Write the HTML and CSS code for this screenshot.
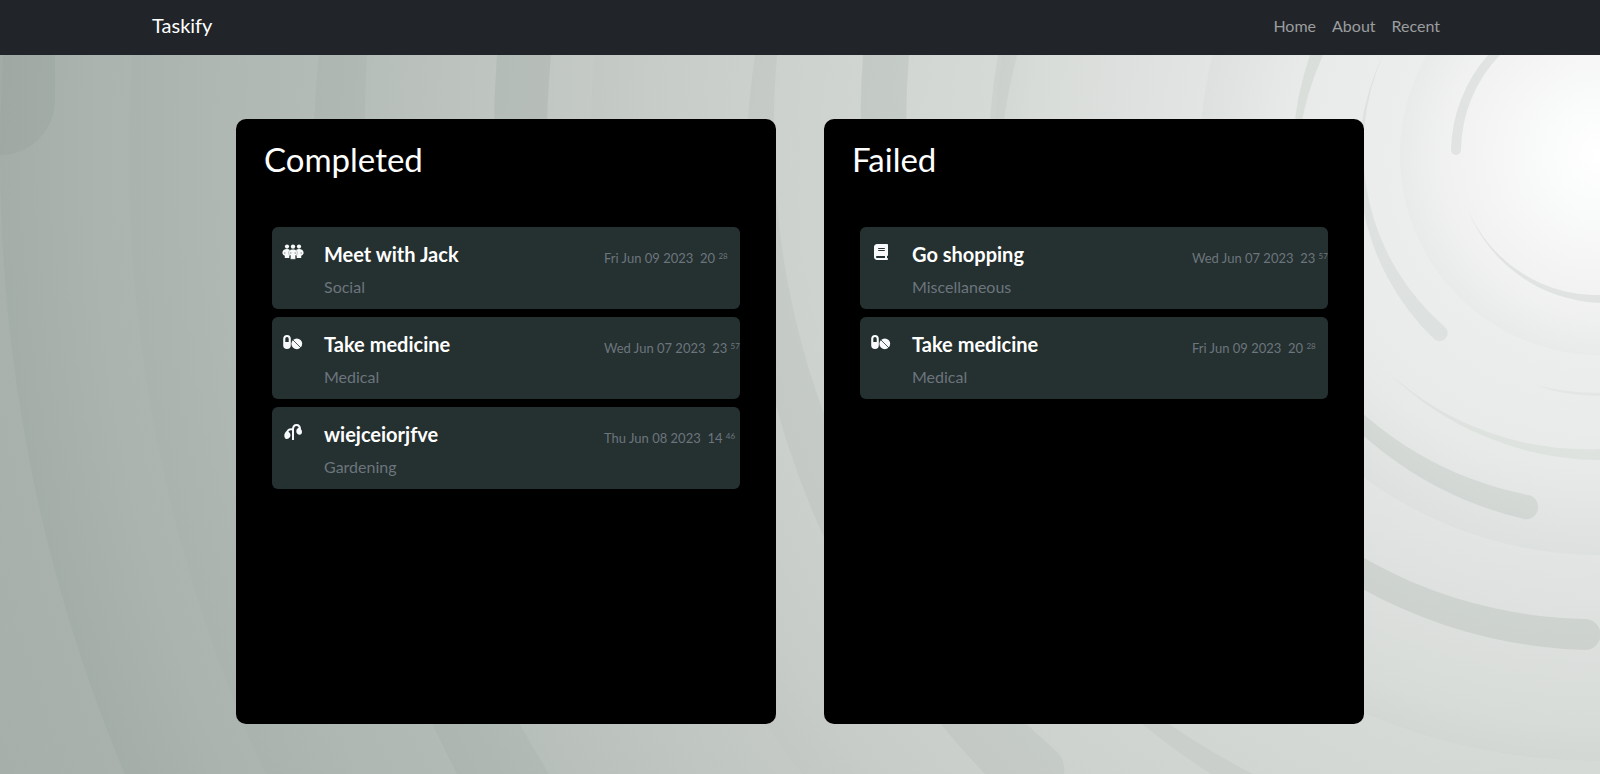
FILE: index.html
```html
<!DOCTYPE html>
<html lang="en">
<head>
<meta charset="utf-8">
<title>Taskify</title>
<link rel="stylesheet" href="styles.css">
</head>
<body>
<svg class="defs" aria-hidden="true">
  <symbol id="i-social" viewBox="0 0 22 16">
    <g fill="currentColor">
      <circle cx="5" cy="2.600" r="2.100"/><circle cx="11" cy="2.600" r="2.200"/><circle cx="17" cy="2.600" r="2.100"/>
      <path d="M5 5C7.500 5 9 6.600 9 8.800 9 10.300 8.200 11.300 7.300 11.700V14H2.800V11.700C1.300 11.200.4 10.200.4 8.800.4 6.600 2.200 5 5 5zM17 5C14.500 5 13 6.600 13 8.800 13 10.300 13.800 11.300 14.700 11.700V14H19.200V11.700C20.700 11.200 21.600 10.200 21.600 8.800 21.600 6.600 19.800 5 17 5z"/>
    </g>
    <path d="M11 5.200C13.700 5.200 15.300 6.700 15.300 8.700 15.300 10.300 14.600 11.200 13.500 11.600V15.300H8.500V11.600C7.400 11.200 6.700 10.300 6.700 8.700 6.700 6.700 8.300 5.200 11 5.200z" fill="currentColor" stroke="#253030" stroke-width=".3"/>
    <path d="M2.800 8v2M19.200 8v2M8.800 8v2M13.200 8v2" stroke="#253030" stroke-width=".4"/>
  </symbol>
  <symbol id="i-medical" viewBox="0 0 22 16">
    <path fill="currentColor" fill-rule="evenodd" d="M5 1a3.800 3.800 0 0 1 3.800 3.800v6.400a3.800 3.800 0 0 1-7.600 0V4.800A3.800 3.800 0 0 1 5 1zM5 3a1.700 1.700 0 0 0-1.700 1.700V8h3.400V4.700A1.700 1.700 0 0 0 5 3z"/>
    <circle cx="14.800" cy="9.800" r="5.400" fill="currentColor"/>
    <path d="M10.800 5.800l8.200 8.200" stroke="#253030" stroke-width=".8"/>
  </symbol>
  <symbol id="i-garden" viewBox="0 0 22 16">
    <g fill="none" stroke="currentColor" stroke-width="2">
      <path d="M11 16V5.500C11 2.500 12.300 1 14.500 1S18 2.500 18 5.500M11 5.500C7 4.500 5 6.500 5 10"/>
    </g>
    <path fill="currentColor" d="M17 3.500C18.800 4.500 20 6 20 8 20 9.600 19 10.800 17.700 10.800 15.800 10.800 14.300 9.300 14.300 7.300 14.300 5.500 15.300 4.300 17 3.500zM5 7C3.300 8 2.300 9.700 2.300 11.600 2.300 13.500 3.200 15 4.500 15 6.800 14.800 8.500 13.200 8.500 11.200 8.500 9.200 7.200 7.800 5 7z"/>
  </symbol>
  <symbol id="i-book" viewBox="0 0 448 512">
    <path fill="currentColor" d="M96 0C43 0 0 43 0 96V416c0 53 43 96 96 96H384h32c17.700 0 32-14.300 32-32s-14.300-32-32-32V384c17.700 0 32-14.300 32-32V32c0-17.700-14.300-32-32-32H384 96zm0 384H352v64H96c-17.700 0-32-14.300-32-32s14.300-32 32-32zm32-240c0-8.800 7.200-16 16-16H336c8.800 0 16 7.200 16 16s-7.200 16-16 16H144c-8.800 0-16-7.200-16-16zm16 48H336c8.800 0 16 7.200 16 16s-7.200 16-16 16H144c-8.800 0-16-7.200-16-16s7.200-16 16-16z"/>
  </symbol>
</svg>

<header class="navbar">
  <nav class="nav-inner">
    <a class="brand" href="#">Taskify</a>
    <div class="nav-links">
      <a class="nav-link" href="#">Home</a>
      <a class="nav-link" href="#">About</a>
      <a class="nav-link" href="#">Recent</a>
    </div>
  </nav>
</header>

<div class="stage">
  <svg class="backdrop" viewBox="0 55 1600 719" preserveAspectRatio="xMaxYMin slice" aria-hidden="true">
    <defs>
      <radialGradient id="glow" gradientUnits="userSpaceOnUse" cx="1600" cy="155" r="1720">
        <stop offset="0" stop-color="#ffffff"/>
        <stop offset=".03" stop-color="#fafbfb"/>
        <stop offset=".07" stop-color="#f3f4f3"/>
        <stop offset=".116" stop-color="#eceeed"/>
        <stop offset=".17" stop-color="#e8ebe9"/>
        <stop offset=".23" stop-color="#e2e5e3"/>
        <stop offset=".34" stop-color="#d7dbd8"/>
        <stop offset=".46" stop-color="#ced3d0"/>
        <stop offset=".58" stop-color="#c5cac6"/>
        <stop offset=".68" stop-color="#bbc2be"/>
        <stop offset=".76" stop-color="#b1bab5"/>
        <stop offset=".87" stop-color="#abb4af"/>
        <stop offset="1" stop-color="#a6afa9"/>
      </radialGradient>
      <radialGradient id="ring" cx=".5" cy=".5" r=".5">
        <stop offset=".8" stop-color="#6e7f76" stop-opacity="0"/>
        <stop offset="1" stop-color="#6e7f76" stop-opacity=".04"/>
      </radialGradient>
      <radialGradient id="ring-wide" cx=".5" cy=".5" r=".5">
        <stop offset=".94" stop-color="#6e7f76" stop-opacity="0"/>
        <stop offset="1" stop-color="#6e7f76" stop-opacity=".08"/>
      </radialGradient>
    </defs>
    <rect x="-800" y="55" width="2400" height="1600" fill="url(#glow)"/>
    <circle cx="1600" cy="155" r="1600" fill="url(#ring-wide)"/>
    <circle cx="1600" cy="155" r="1471" fill="url(#ring-wide)" opacity=".4"/>
    <circle cx="1600" cy="155" r="1010" fill="url(#ring-wide)" opacity=".3"/>
    <circle cx="1600" cy="155" r="606" fill="url(#ring-wide)" opacity=".4"/>
    <circle cx="1600" cy="155" r="400" fill="url(#ring)"/>
    <circle cx="1600" cy="155" r="200" fill="url(#ring)" opacity=".7"/>
    <g fill="#6e7f76">
      <path opacity=".09" d="M0 55H55V100A55 55 0 0 1 0 155Z"/>
      <path opacity=".08" d="M319 55A1290 1290 0 0 0 457 774H549A1228 1228 0 0 1 367 55Z"/>
      <path opacity=".12" d="M497 55A1107 1107 0 0 0 570 540L610 510A1052 1052 0 0 1 551 55Z"/>
      <path opacity=".08" d="M755 55A858 858 0 0 0 985 774H1064Q1066 760 1055 750A822 822 0 0 1 777 55Z"/>
      <path opacity=".12" d="M863 55A740 740 0 0 0 900 350L940 330A700 700 0 0 1 909 55Z"/>
      <path opacity=".07" d="M950 480A730 730 0 0 0 1211 774H1253A710 710 0 0 1 950 480Z"/>
      <path opacity=".08" d="M998 55A610 610 0 0 0 1010 320A590 590 0 0 1 1017 55Z"/>
      <path opacity=".14" d="M1109 155A491 491 0 0 0 1585 650A15 15 0 0 0 1585 619A464 464 0 0 1 1130 155Z"/>
      <path opacity=".12" d="M1240 155A368 368 0 0 0 1524 519A12 12 0 0 0 1528 495A350 350 0 0 1 1245 155Z"/>
      <path opacity=".11" d="M1310 55A307 307 0 0 0 1300 220A293 293 0 0 1 1323 55Z"/>
      <path opacity=".07" d="M1390 374A304 304 0 0 0 1600 460V449A296 296 0 0 1 1390 374Z"/>
      <path opacity=".1" d="M1383 55A246 246 0 0 0 1434 339A8 8 0 0 0 1445 327A234 234 0 0 1 1383 55Z"/>
      <path opacity=".12" d="M1488 55A149 149 0 0 0 1451 150A5 5 0 0 0 1461 150A139 139 0 0 1 1500 55Z"/>
      <path opacity=".12" d="M1468 210A148 148 0 0 0 1600 303V295A141 141 0 0 1 1468 210Z"/>
      <path opacity=".06" d="M1535 385Q1565 396 1600 396V393Q1565 393 1535 385Z"/>
    </g>
  </svg>

  <main class="board">
    <section class="panel">
      <h2 class="panel-title">Completed</h2>
      <ul class="tasks">
        <li class="task">
          <svg class="icon"><use href="#i-social"/></svg>
          <div class="info"><h3 class="name">Meet with Jack</h3><p class="kind">Social</p></div>
          <time class="date">Fri Jun 09 2023 &nbsp;20 <sup>28</sup></time>
        </li>
        <li class="task">
          <svg class="icon"><use href="#i-medical"/></svg>
          <div class="info"><h3 class="name">Take medicine</h3><p class="kind">Medical</p></div>
          <time class="date">Wed Jun 07 2023 &nbsp;23 <sup>57</sup></time>
        </li>
        <li class="task">
          <svg class="icon"><use href="#i-garden"/></svg>
          <div class="info"><h3 class="name">wiejceiorjfve</h3><p class="kind">Gardening</p></div>
          <time class="date">Thu Jun 08 2023 &nbsp;14 <sup>46</sup></time>
        </li>
      </ul>
    </section>
    <section class="panel">
      <h2 class="panel-title">Failed</h2>
      <ul class="tasks">
        <li class="task">
          <svg class="icon"><use href="#i-book"/></svg>
          <div class="info"><h3 class="name">Go shopping</h3><p class="kind">Miscellaneous</p></div>
          <time class="date">Wed Jun 07 2023 &nbsp;23 <sup>57</sup></time>
        </li>
        <li class="task">
          <svg class="icon"><use href="#i-medical"/></svg>
          <div class="info"><h3 class="name">Take medicine</h3><p class="kind">Medical</p></div>
          <time class="date">Fri Jun 09 2023 &nbsp;20 <sup>28</sup></time>
        </li>
      </ul>
    </section>
  </main>
</div>
</body>
</html>
```
FILE: styles.css
```css
* {
  box-sizing: border-box;
}

body {
  margin: 0;
  min-height: 100vh;
  display: flex;
  flex-direction: column;
  font-family: Lato, "Open Sans", sans-serif;
  font-size: 16px;
  line-height: 24px;
  color: #fff;
  background: #a6afa9;
}

.defs {
  position: absolute;
  width: 0;
  height: 0;
}

.navbar {
  background: #212529;
  padding: 6px 0 10px;
}

.nav-inner {
  max-width: 1320px;
  margin: 0 auto;
  padding: 0 12px;
  display: flex;
  align-items: center;
  justify-content: space-between;
}

.brand {
  color: #fff;
  font-size: 20px;
  line-height: 39px;
  text-decoration: none;
}

.nav-links {
  display: flex;
}

.nav-link {
  padding: 8px;
  font-size: 16px;
  line-height: 23px;
  color: #9b9d9f;
  text-decoration: none;
}

.stage {
  position: relative;
  flex: 1;
  display: flex;
  overflow: hidden;
}

.backdrop {
  position: absolute;
  inset: 0;
  width: 100%;
  height: 100%;
}

.board {
  position: relative;
  flex: 1;
  max-width: 1176px;
  margin: 0 auto;
  padding: 64px 24px 50px;
  display: flex;
  gap: 48px;
}

.panel {
  flex: 1;
  min-width: 0;
  padding: 20px 36px;
  background: #000;
  border-radius: 10px;
}

.panel-title {
  margin: 0 -8px 48px;
  font-size: 33px;
  line-height: 40px;
  font-weight: 400;
}

.tasks {
  margin: 0;
  padding: 0;
  list-style: none;
  display: flex;
  flex-direction: column;
  gap: 8px;
}

.task {
  min-height: 82px;
  padding: 12px 0 0 10px;
  display: grid;
  grid-template-columns: 42px minmax(0, 1fr) 136px;
  background: #253030;
  border-radius: 6px;
}

.icon {
  width: 22px;
  height: 16px;
  margin-top: 5px;
  color: #f8f9fa;
}

.name {
  margin: 0;
  font-size: 20px;
  line-height: 30px;
  font-weight: 700;
}

.kind {
  margin: 0;
  font-size: 16px;
  line-height: 36px;
  color: #6c757d;
}

.date {
  font-size: 13px;
  line-height: 38px;
  color: #6c757d;
  white-space: nowrap;
}

.date sup {
  font-size: 8px;
  line-height: 0;
  vertical-align: 4px;
}
```
